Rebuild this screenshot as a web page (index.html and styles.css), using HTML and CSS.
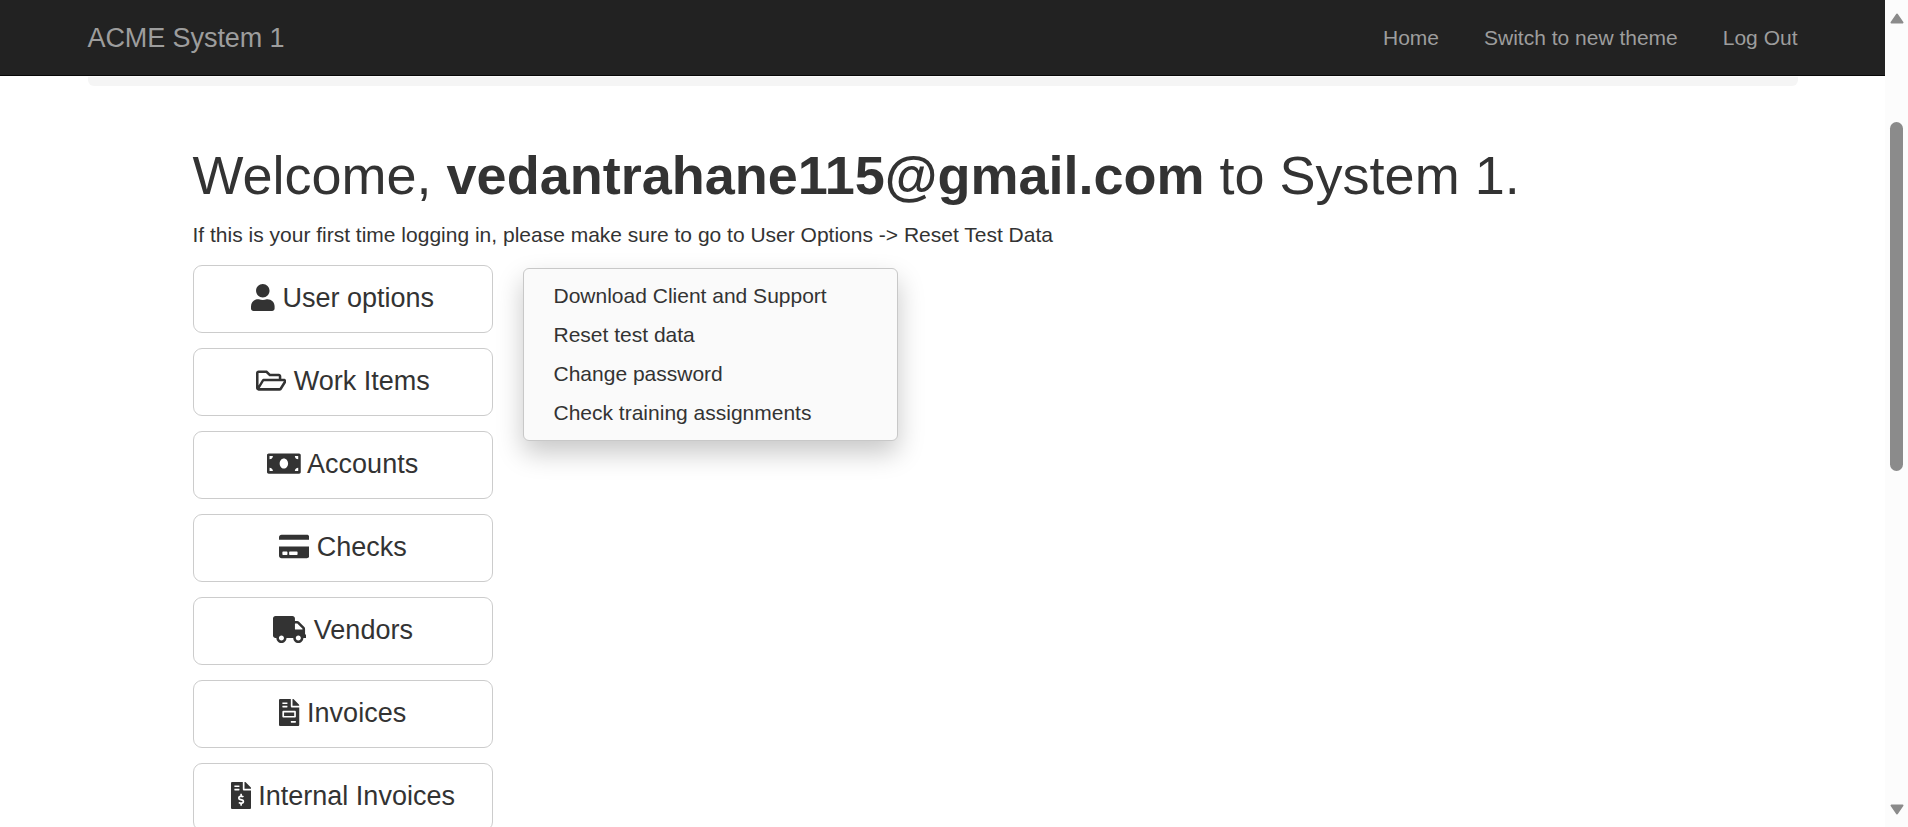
FILE: index.html
```html
<!DOCTYPE html>
<html lang="en">
<head>
<meta charset="utf-8">
<title>ACME System 1 - Dashboard</title>
<link rel="stylesheet" href="styles.css">
</head>
<body>
<div class="page">
  <header class="navbar">
    <a class="brand">ACME System 1</a>
    <nav class="nav-links"><a class="home">Home</a><a class="theme">Switch to new theme</a><a class="logout">Log Out</a></nav>
  </header>
  <div class="well"></div>
  <main class="content">
    <h1>Welcome, <b>vedantrahane115@gmail.com</b> to System 1.</h1>
    <p class="hint">If this is your first time logging in, please make sure to go to User Options -&gt; Reset Test Data</p>
    <div class="dashboard">
      <div class="buttons">
        <button class="btn"><svg class="icon w448" viewBox="0 0 448 512"><path d="M224 256c70.7 0 128-57.3 128-128S294.7 0 224 0 96 57.3 96 128s57.3 128 128 128zm89.6 32h-16.7c-22.2 10.2-46.9 16-72.9 16s-50.6-5.8-72.9-16h-16.7C60.2 288 0 348.2 0 422.4V464c0 26.5 21.5 48 48 48h352c26.5 0 48-21.5 48-48v-41.6c0-74.2-60.2-134.4-134.4-134.4z"/></svg> User options</button>
        <button class="btn"><svg class="icon w576" viewBox="0 0 576 512"><path d="M527.9 224H480v-48c0-26.5-21.5-48-48-48H272l-64-64H48C21.5 64 0 85.5 0 112v288c0 26.5 21.5 48 48 48h400c16.5 0 31.9-8.5 40.7-22.6l79.9-128c20-31.9-3-73.4-40.7-73.4zM48 118c0-3.3 2.7-6 6-6h134.1l64 64H426c3.3 0 6 2.7 6 6v42H152c-16.8 0-32.4 8.8-41.1 23.2L48 351.4zm400 282H72l77.2-128H528z"/></svg> Work Items</button>
        <button class="btn"><svg class="icon w640" viewBox="0 0 640 512"><path d="M608 64H32C14.33 64 0 78.33 0 96v320c0 17.67 14.33 32 32 32h576c17.67 0 32-14.33 32-32V96c0-17.67-14.33-32-32-32zM48 400v-64c35.35 0 64 28.65 64 64H48zm0-224v-64h64c0 35.35-28.65 64-64 64zm272 176c-44.19 0-80-42.99-80-96 0-53.02 35.82-96 80-96s80 42.98 80 96c0 53.03-35.83 96-80 96zm272 48h-64c0-35.35 28.65-64 64-64v64zm0-224c-35.35 0-64-28.65-64-64h64v64z"/></svg> Accounts</button>
        <button class="btn"><svg class="icon w576" viewBox="0 0 576 512"><path d="M0 432c0 26.5 21.5 48 48 48h480c26.5 0 48-21.5 48-48V256H0v176zm192-68c0-6.6 5.4-12 12-12h136c6.6 0 12 5.4 12 12v40c0 6.6-5.4 12-12 12H204c-6.6 0-12-5.4-12-12v-40zm-128 0c0-6.6 5.4-12 12-12h72c6.6 0 12 5.4 12 12v40c0 6.6-5.4 12-12 12H76c-6.6 0-12-5.4-12-12v-40zM576 80v48H0V80c0-26.5 21.5-48 48-48h480c26.5 0 48 21.5 48 48z"/></svg> Checks</button>
        <button class="btn"><svg class="icon w640" viewBox="0 0 640 512"><path d="M624 352h-16V243.9c0-12.7-5.1-24.9-14.1-33.9L494 110.1c-9-9-21.2-14.1-33.9-14.1H416V48c0-26.5-21.5-48-48-48H48C21.5 0 0 21.5 0 48v320c0 26.5 21.5 48 48 48h16c0 53 43 96 96 96s96-43 96-96h128c0 53 43 96 96 96s96-43 96-96h48c8.8 0 16-7.2 16-16v-32c0-8.8-7.2-16-16-16zM160 464c-26.5 0-48-21.5-48-48s21.5-48 48-48 48 21.5 48 48-21.5 48-48 48zm320 0c-26.5 0-48-21.5-48-48s21.5-48 48-48 48 21.5 48 48-21.5 48-48 48zm80-208H416V144h44.1l99.9 99.9V256z"/></svg> Vendors</button>
        <button class="btn"><svg class="icon w384" viewBox="0 0 384 512"><path d="M288 256H96v64h192v-64zm89-151L279.1 7c-4.5-4.5-10.6-7-17-7H256v128h128v-6.1c0-6.3-2.5-12.4-7-16.9zm-153 31V0H24C10.7 0 0 10.7 0 24v464c0 13.3 10.7 24 24 24h336c13.3 0 24-10.7 24-24V160H248c-13.2 0-24-10.8-24-24zM64 72c0-4.42 3.58-8 8-8h80c4.42 0 8 3.58 8 8v16c0 4.42-3.58 8-8 8H72c-4.42 0-8-3.58-8-8V72zm0 64c0-4.42 3.58-8 8-8h80c4.42 0 8 3.58 8 8v16c0 4.42-3.58 8-8 8H72c-4.42 0-8-3.58-8-8v-16zm256 304c0 4.42-3.58 8-8 8h-80c-4.42 0-8-3.58-8-8v-16c0-4.42 3.58-8 8-8h80c4.42 0 8 3.58 8 8v16zm0-200v96c0 8.84-7.16 16-16 16H80c-8.84 0-16-7.16-16-16v-96c0-8.84 7.16-16 16-16h224c8.84 0 16 7.16 16 16z"/></svg> Invoices</button>
        <button class="btn"><svg class="icon w384" viewBox="0 0 384 512"><path d="M377 105L279.1 7c-4.5-4.5-10.6-7-17-7H256v128h128v-6.1c0-6.3-2.5-12.4-7-16.9zm-153 31V0H24C10.7 0 0 10.7 0 24v464c0 13.3 10.7 24 24 24h336c13.3 0 24-10.7 24-24V160H248c-13.2 0-24-10.8-24-24zM64 72c0-4.42 3.58-8 8-8h80c4.42 0 8 3.58 8 8v16c0 4.42-3.58 8-8 8H72c-4.42 0-8-3.58-8-8V72zm0 80v-16c0-4.42 3.58-8 8-8h80c4.42 0 8 3.58 8 8v16c0 4.42-3.58 8-8 8H72c-4.42 0-8-3.58-8-8zm144 263.88V440c0 4.42-3.58 8-8 8h-16c-4.42 0-8-3.58-8-8v-24.29c-11.29-.58-22.27-4.52-31.37-11.35-3.9-2.93-4.1-8.77-.57-12.14l11.75-11.21c2.77-2.64 6.89-2.76 10.13-.73 3.87 2.42 8.26 3.72 12.82 3.72h28.11c6.5 0 11.8-5.92 11.8-13.19 0-5.95-3.61-11.19-8.77-12.73l-45-13.5c-18.59-5.58-31.58-23.42-31.58-43.39 0-24.52 19.05-44.44 42.67-45.07V232c0-4.42 3.58-8 8-8h16c4.42 0 8 3.58 8 8v24.29c11.29.58 22.27 4.51 31.37 11.35 3.9 2.93 4.1 8.77.57 12.14l-11.75 11.21c-2.77 2.64-6.89 2.76-10.13.73-3.87-2.43-8.26-3.72-12.82-3.72h-28.11c-6.5 0-11.8 5.92-11.8 13.19 0 5.95 3.61 11.19 8.77 12.73l45 13.5c18.59 5.58 31.58 23.42 31.58 43.39 0 24.53-19.05 44.44-42.67 45.07z"/></svg> Internal Invoices</button>
      </div>
      <ul class="menu">
        <li>Download Client and Support</li>
        <li>Reset test data</li>
        <li>Change password</li>
        <li>Check training assignments</li>
      </ul>
    </div>
  </main>
</div>
<div class="scrollbar">
  <svg class="arrow" viewBox="0 0 14 11"><path d="M7 1.5L12.5 9.5H1.5Z"/></svg>
  <div class="thumb"></div>
  <svg class="arrow down" viewBox="0 0 14 11"><path d="M7 9.5L1.5 1.5H12.5Z"/></svg>
</div>
</body>
</html>
```

FILE: styles.css
```css
* { box-sizing: border-box; }

body {
  margin: 0;
  display: flex;
  height: 100vh;
  overflow: hidden;
  background: #fff;
  color: #333;
  font: 21px/30px "Liberation Sans", Arial, sans-serif;
}

.page { flex: 1; height: 100vh; overflow: hidden; }

.navbar {
  display: flex;
  justify-content: space-between;
  align-items: center;
  height: 76px;
  padding: 0 87.5px 0 87.5px;
  background: #222;
  border-bottom: 1px solid #080808;
  color: #9d9d9d;
}

.brand { font-size: 27px; letter-spacing: -.08px; }
.nav-links { display: flex; gap: 45px; }

.well {
  height: 10px;
  margin: 0 87px 0 87.5px;
  background: #f5f5f5;
  border-top: 1px solid #fdfdfd;
  border-radius: 0 0 6px 6px;
}

.content { padding: 60px 0 0 192.5px; }

h1 {
  margin: 0 0 15px;
  font-size: 54px;
  line-height: 59px;
  font-weight: 400;
  white-space: nowrap;
}

.hint { margin: 0 0 15px; }

.dashboard { display: flex; align-items: flex-start; gap: 30px; }
.buttons { display: flex; flex-direction: column; gap: 15px; width: 300.5px; }

.btn {
  height: 68px;
  padding: 0 0 2px;
  border: 1px solid #ccc;
  border-radius: 9px;
  background: #fff;
  color: #333;
  font: 27px/36px "Liberation Sans", Arial, sans-serif;
  white-space: nowrap;
}

.icon { height: 27px; fill: #333; vertical-align: -3.8px; }
.w384 { width: 20.25px; }
.w448 { width: 23.6px; }
.w576 { width: 30.4px; }
.w640 { width: 33.75px; }

.menu {
  width: 375px;
  height: 173px;
  margin: 3px 0 0;
  padding: 7px 0 8px 29.5px;
  list-style: none;
  background: #fafafa;
  border: 1px solid #c8c8c8;
  border-radius: 6px;
  box-shadow: 0 12px 27px rgba(0, 0, 0, .22);
}

.menu li { height: 39px; line-height: 39px; }

.scrollbar {
  display: flex;
  flex-direction: column;
  align-items: center;
  width: 23px;
  padding: 13px 0 12px;
  background: #fcfcfc;
}

.arrow {
  width: 14px;
  height: 11px;
  fill: #8b8b8b;
  stroke: #8b8b8b;
  stroke-width: 2;
  stroke-linejoin: round;
}

.thumb { width: 13px; height: 349px; margin-top: 98px; border-radius: 7px; background: #8b8b8b; }
.down { margin-top: auto; }
```
